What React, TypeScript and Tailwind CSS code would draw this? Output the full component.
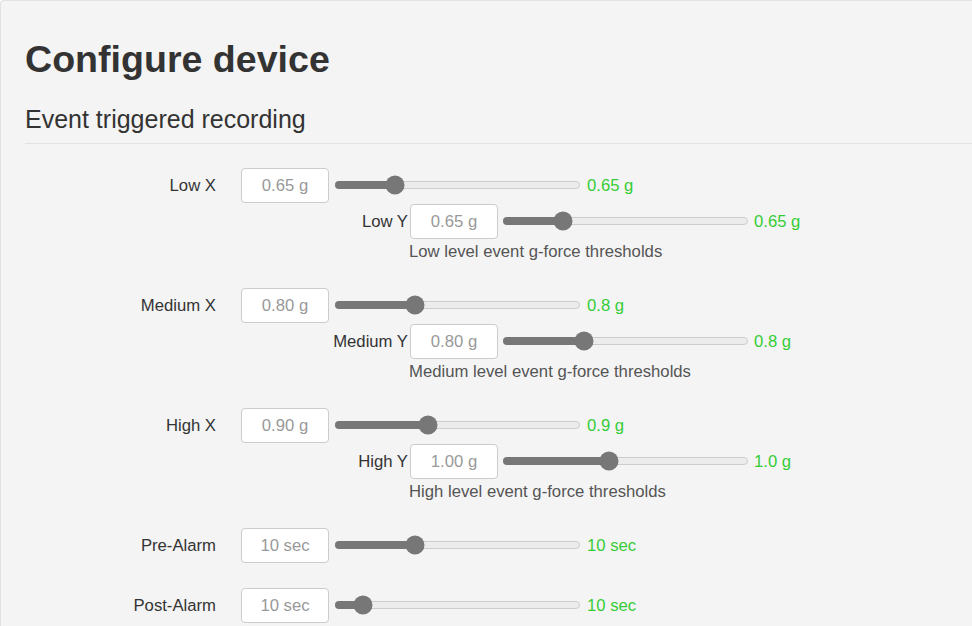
import React from 'react'

interface SliderProps {
    pos: number
}

// track is 245px wide, pos is the thumb centre in px from the track start
function Slider({ pos }: SliderProps) {
    return (
        <div className="relative w-[245px] h-[8px] rounded-full bg-[#ececec] border border-[#cccccc]">
            <div className="absolute -left-px -top-px h-[8px] rounded-full bg-[#777777]" style={{ width: pos + 1 }} />
            <div
                className="absolute top-1/2 w-[19px] h-[19px] -translate-x-1/2 -translate-y-1/2 rounded-full bg-[#777777]"
                style={{ left: pos - 1 }}
            />
        </div>
    )
}

function Field({ value }: { value: string }) {
    return (
        <div className="w-[88px] h-[35px] flex items-center justify-center bg-white border border-[#cccccc] rounded-[4px] text-[#999999]">
            {value}
        </div>
    )
}

interface AxisGroup {
    name: string
    x: string
    xVal: string
    xPos: number
    y: string
    yVal: string
    yPos: number
    help: string
}

const groups: AxisGroup[] = [
    { name: 'Low', x: '0.65 g', xVal: '0.65 g', xPos: 60, y: '0.65 g', yVal: '0.65 g', yPos: 60, help: 'Low level event g-force thresholds' },
    { name: 'Medium', x: '0.80 g', xVal: '0.8 g', xPos: 80, y: '0.80 g', yVal: '0.8 g', yPos: 81, help: 'Medium level event g-force thresholds' },
    { name: 'High', x: '0.90 g', xVal: '0.9 g', xPos: 93, y: '1.00 g', yVal: '1.0 g', yPos: 106, help: 'High level event g-force thresholds' },
]

const timers = [
    { label: 'Pre-Alarm', value: '10 sec', pos: 80 },
    { label: 'Post-Alarm', value: '10 sec', pos: 28 },
]

export default function App() {
    return (
        <div className="min-h-[626px] bg-[#f4f4f4] border-l border-t border-[#e2e2e2] rounded-tl-[4px] pl-6 pt-[38px] text-[16.7px] text-[#333333] font-['Liberation_Sans',Arial,sans-serif] overflow-hidden">
            <h1 className="text-[37.6px] leading-[1.1] font-bold m-0">Configure device</h1>
            <div className="mt-[25.5px] pb-[9.5px] border-b border-[#e2e2e2]">
                <h3 className="text-[25px] leading-[1.1] font-normal">Event triggered recording</h3>
            </div>

            <div className="mt-6">
                {groups.map((g) => (
                    <div key={g.name} className="mb-[24px]">
                        {/* X axis */}
                        <div className="flex items-center mb-px">
                            <label className="w-[191px] text-right">{g.name} X</label>
                            <div className="ml-[25px]">
                                <Field value={g.x} />
                            </div>
                            <div className="ml-[6px]">
                                <Slider pos={g.xPos} />
                            </div>
                            <span className="ml-[7px] text-[#36cc36]">{g.xVal}</span>
                        </div>

                        {/* Y axis */}
                        <div className="flex items-center ml-[216px]">
                            <label className="w-[167px] text-right">{g.name} Y</label>
                            <div className="ml-[2px]">
                                <Field value={g.y} />
                            </div>
                            <div className="ml-[5px]">
                                <Slider pos={g.yPos} />
                            </div>
                            <span className="ml-[6px] text-[#36cc36]">{g.yVal}</span>
                        </div>

                        <p className="ml-[384px] leading-[25px] text-[#555555]">{g.help}</p>
                    </div>
                ))}

                {timers.map((t) => (
                    <div key={t.label} className="flex items-center mb-[25px]">
                        <label className="w-[191px] text-right">{t.label}</label>
                        <div className="ml-[25px]">
                            <Field value={t.value} />
                        </div>
                        <div className="ml-[6px]">
                            <Slider pos={t.pos} />
                        </div>
                        <span className="ml-[7px] text-[#36cc36]">{t.value}</span>
                    </div>
                ))}
            </div>
        </div>
    )
}
